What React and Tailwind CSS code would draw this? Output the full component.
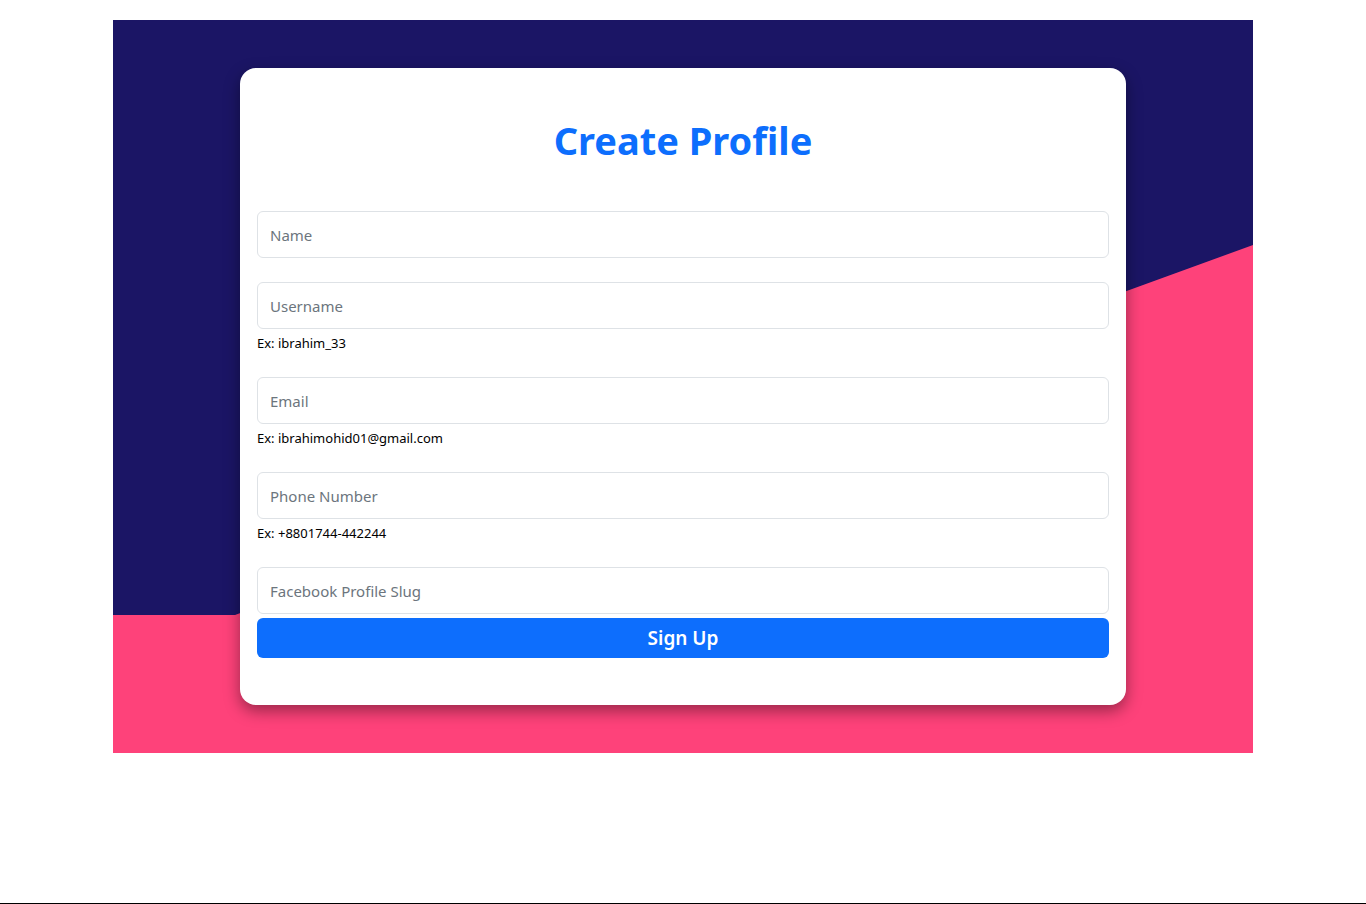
import React from 'react';

const fields = [
  { placeholder: 'Name' },
  { placeholder: 'Username', help: 'Ex: ibrahim_33' },
  { placeholder: 'Email', help: 'Ex: ibrahimohid01@gmail.com' },
  { placeholder: 'Phone Number', help: 'Ex: +8801744-442244' },
];

const inputCls =
  'w-full h-[47px] px-3 border border-[#dee2e6] rounded-md text-[15px] text-gray-800 placeholder:text-[#6c757d] outline-none';

export default function App() {
  return (
    <div className="min-h-[904px] bg-white border-b border-black font-['Noto_Sans',sans-serif] pt-5">
      <div className="relative mx-auto w-[1140px] h-[733px] bg-[#1b1565] flex items-center justify-center">
        {/* background wave */}
        <svg className="absolute inset-0 w-full h-full" viewBox="0 0 1140 733" preserveAspectRatio="none">
          <polygon points="0,595 122,595 1140,225 1140,733 0,733" fill="#fe427a" />
        </svg>
        <div className="relative w-[886px] h-[637px] bg-white rounded-2xl shadow-[0_6px_16px_rgba(0,0,0,0.4)] px-[17px] pt-12">
          <h1 className="text-center text-[38px] leading-[48px] font-bold text-[#0d6efd]">Create Profile</h1>
          <form className="mt-[47px]" onSubmit={e => e.preventDefault()}>
            {fields.map(f => (
              <div key={f.placeholder} className="mb-6">
                <input type="text" placeholder={f.placeholder} className={inputCls} />
                {f.help && <div className="mt-1 text-[13px] leading-5 text-black">{f.help}</div>}
              </div>
            ))}
            <input type="text" placeholder="Facebook Profile Slug" className={inputCls} />
            <button type="submit" className="mt-1 w-full h-10 rounded-md bg-[#0d6efd] text-white text-[19px] font-semibold">
              Sign Up
            </button>
          </form>
        </div>
      </div>
    </div>
  );
}
